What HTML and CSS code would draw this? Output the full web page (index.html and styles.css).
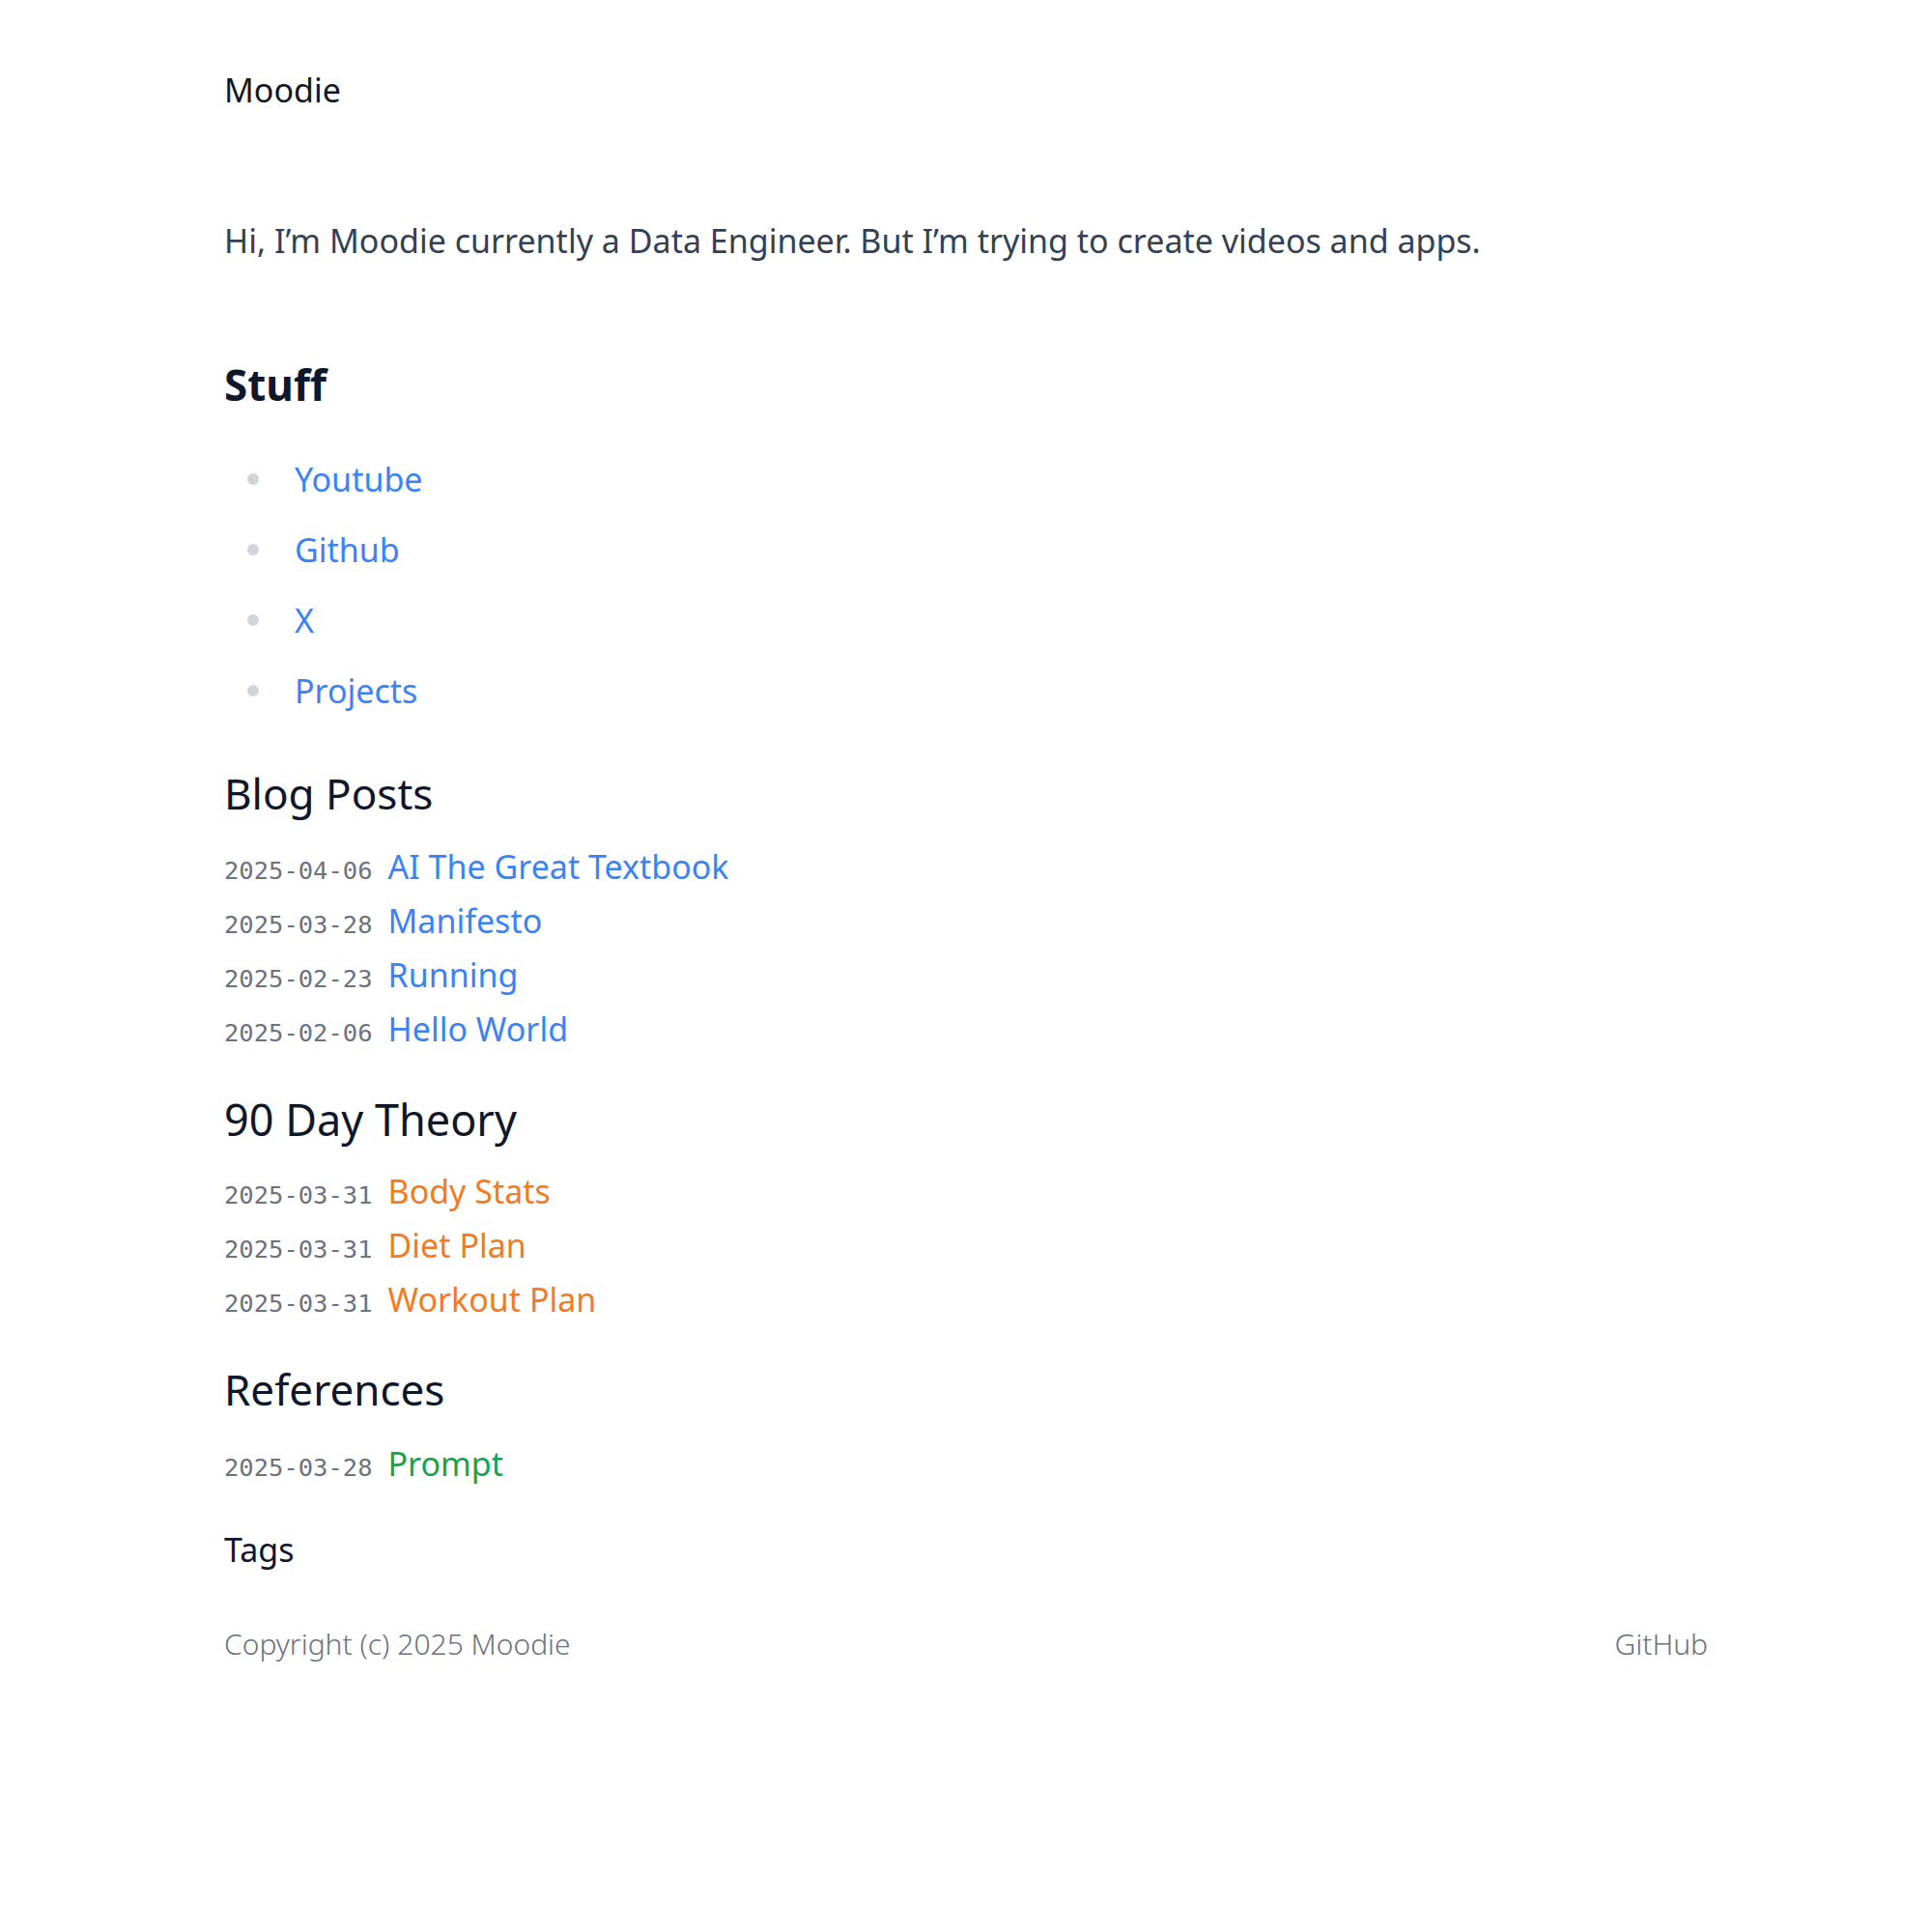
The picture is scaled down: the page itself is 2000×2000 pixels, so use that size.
FILE: index.html
```html
<!DOCTYPE html>
<html lang="en">
<head>
<meta charset="utf-8">
<title>Moodie</title>
<link rel="stylesheet" href="styles.css">
</head>
<body>
<div class="page">
  <header class="site-header">
    <a class="brand" href="#">Moodie</a>
  </header>
  <main class="content">
    <p class="intro">Hi, I’m Moodie currently a Data Engineer. But I’m trying to create videos and apps.</p>

    <h2 class="stuff-title">Stuff</h2>
    <ul class="stuff-list">
      <li><a href="#">Youtube</a></li>
      <li><a href="#">Github</a></li>
      <li><a href="#">X</a></li>
      <li><a href="#">Projects</a></li>
    </ul>

    <section class="group group-blog">
      <h2 class="group-title">Blog Posts</h2>
      <ul class="post-list">
        <li class="post"><time class="post-date">2025-04-06</time><a class="post-link" href="#">AI The Great Textbook</a></li>
        <li class="post"><time class="post-date">2025-03-28</time><a class="post-link" href="#">Manifesto</a></li>
        <li class="post"><time class="post-date">2025-02-23</time><a class="post-link" href="#">Running</a></li>
        <li class="post"><time class="post-date">2025-02-06</time><a class="post-link" href="#">Hello World</a></li>
      </ul>
    </section>

    <section class="group group-theory">
      <h2 class="group-title">90 Day Theory</h2>
      <ul class="post-list">
        <li class="post"><time class="post-date">2025-03-31</time><a class="post-link" href="#">Body Stats</a></li>
        <li class="post"><time class="post-date">2025-03-31</time><a class="post-link" href="#">Diet Plan</a></li>
        <li class="post"><time class="post-date">2025-03-31</time><a class="post-link" href="#">Workout Plan</a></li>
      </ul>
    </section>

    <section class="group group-refs">
      <h2 class="group-title">References</h2>
      <ul class="post-list">
        <li class="post"><time class="post-date">2025-03-28</time><a class="post-link" href="#">Prompt</a></li>
      </ul>
    </section>

    <h3 class="tags-title">Tags</h3>
  </main>
  <footer class="site-footer">
    <span class="copyright">Copyright (c) 2025 Moodie</span>
    <a class="footer-link" href="#">GitHub</a>
  </footer>
</div>
</body>
</html>
```

FILE: styles.css
```css
* { box-sizing: border-box; }

html, body {
  margin: 0;
  padding: 0;
  background: #ffffff;
}

body {
  font-family: "Noto Sans", "Open Sans", "DejaVu Sans", sans-serif;
  color: #334155;
}

a { text-decoration: none; }

.page {
  max-width: 1536px;
  margin: 0 auto;
  padding-top: 66px;
}

.site-header {
  display: flex;
}

.brand {
  font-size: 34px;
  line-height: 54px;
  color: #111827;
}

.content {
  display: flex;
  flex-direction: column;
}

.intro {
  margin: 102px 0 0;
  font-size: 34px;
  line-height: 54px;
  color: #334155;
}

.stuff-title {
  margin: 90px 0 0;
  font-size: 44px;
  line-height: 64px;
  font-weight: 700;
  color: #0f172a;
}

.stuff-list {
  list-style: none;
  margin: 39px 0 0;
  padding: 0 0 0 24px;
  display: flex;
  flex-direction: column;
  gap: 19px;
}

.stuff-list li {
  display: flex;
  align-items: center;
  font-size: 34px;
  line-height: 54px;
}

.stuff-list li::before {
  content: "";
  width: 12px;
  height: 12px;
  border-radius: 50%;
  background: #d1d5db;
  margin-right: 37px;
}

.stuff-list a { color: #3b82f6; }

.group-blog { margin-top: 47px; }
.group-theory { margin-top: 34px; }
.group-refs { margin-top: 33px; }

.group-title {
  margin: 0;
  font-size: 44px;
  line-height: 64px;
  font-weight: 400;
  color: #0f172a;
}

.group-theory .group-title { font-size: 45px; }

.post-list {
  list-style: none;
  margin: 16px 0 0;
  padding: 0;
}

.group-theory .post-list { margin-top: 14px; }
.group-refs .post-list { margin-top: 17px; }

.post {
  display: flex;
  align-items: baseline;
  gap: 16px;
  height: 56px;
}

.post-date {
  font-family: "DejaVu Sans Mono", "Liberation Mono", monospace;
  font-size: 25.5px;
  line-height: 1;
  color: #6b7280;
}

.post-link {
  font-size: 34px;
  line-height: 56px;
  color: #3b82f6;
}

.group-theory .post-link { color: #f47a1f; }
.group-refs .post-link { color: #16a34a; }

.tags-title {
  margin: 34px 0 0;
  font-size: 34px;
  line-height: 54px;
  font-weight: 400;
  color: #0f172a;
}

.site-footer {
  margin-top: 47px;
  display: flex;
  justify-content: space-between;
  font-size: 30px;
  line-height: 48px;
  font-weight: 300;
  color: #6b7280;
}

.footer-link { color: #6b7280; }
```
